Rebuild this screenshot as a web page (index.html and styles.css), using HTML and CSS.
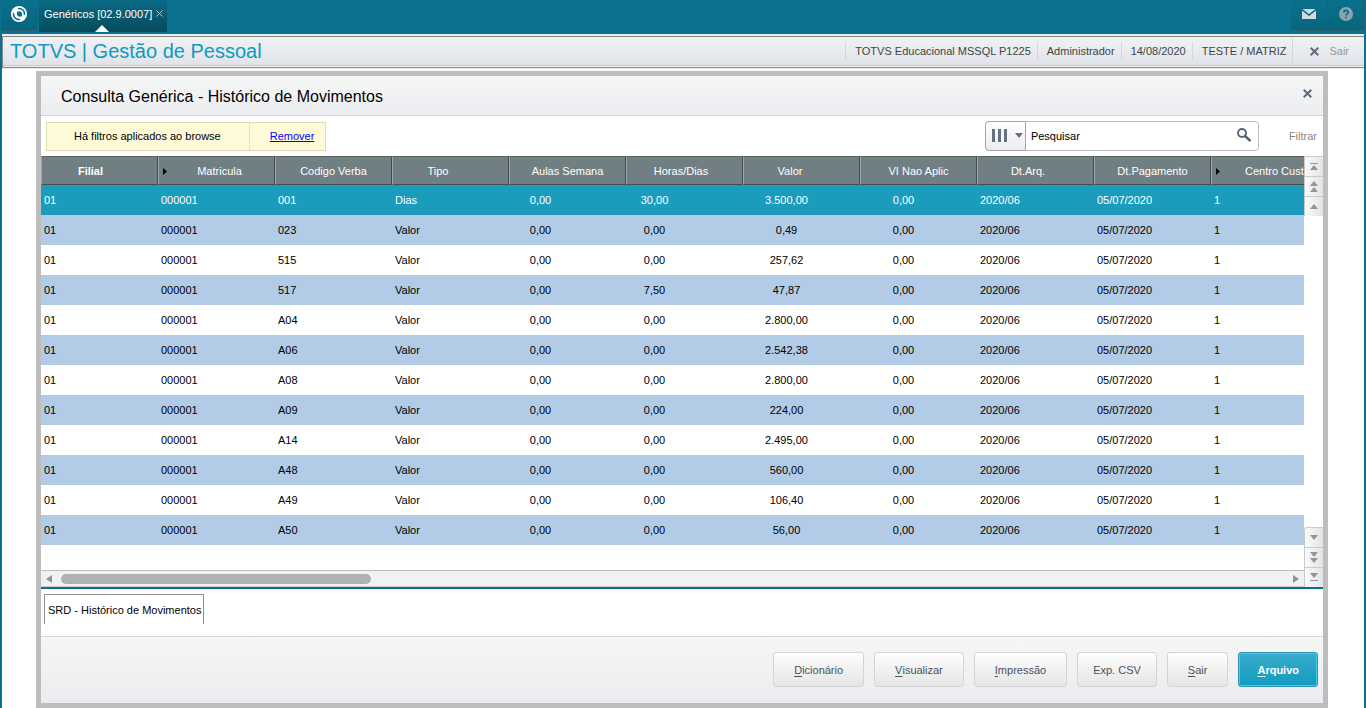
FILE: index.html
```html
<!DOCTYPE html>
<html lang="pt-BR">
<head>
<meta charset="utf-8">
<title>TOTVS | Gestão de Pessoal</title>
<link rel="stylesheet" href="styles.css">
</head>
<body>
<nav class="topbar">
  <button class="top-cell home" aria-label="Início">
    <svg width="18" height="18" viewBox="0 0 18 18"><circle cx="9" cy="9" r="8" fill="#fff"/><path d="M7 6.500h3.500L12 8v3.500H8.500L7 10z" fill="#0a6f8b"/><path d="M8 3.500C12 3 15 6 14.500 10" fill="none" stroke="#0a6f8b" stroke-width="1.500"/><path d="M3.500 8C3 12 6 15 10 14.500" fill="none" stroke="#0a6f8b" stroke-width="1.500"/></svg>
  </button>
  <div class="tab">
    <span>Genéricos [02.9.0007]</span>
    <button class="tab-close" aria-label="Fechar aba"><svg width="7" height="7" viewBox="0 0 7 7" stroke="#a9c6cf"><path d="M.5.500l6 6M6.500.500l-6 6"/></svg></button>
    <svg class="tab-mark" width="14" height="7" viewBox="0 0 14 7" fill="#fff"><path d="M0 7 7 0l7 7z"/></svg>
  </div>
  <div class="top-actions">
    <button class="top-cell" aria-label="Mensagens"><svg width="14" height="10" viewBox="0 0 14 10"><rect width="14" height="10" fill="#cfdbe3"/><path d="M0 .5 7 6l7-5.500" fill="none" stroke="#0a6680" stroke-width="1.500"/></svg></button>
    <button class="top-cell" aria-label="Ajuda"><svg width="14" height="14" viewBox="0 0 14 14"><circle cx="7" cy="7" r="7" fill="#8ba3af"/><path d="M4.800 5.500C4.800 2.600 9.200 2.700 9.200 5.300 9.200 6.900 7 6.800 7 8.600M7 9.700v1.600" fill="none" stroke="#0a6680" stroke-width="1.700"/></svg></button>
  </div>
</nav>
<div class="shell">
  <header class="appbar">
    <h1>TOTVS | Gestão de Pessoal</h1>
    <div class="info">
      <span>TOTVS Educacional MSSQL P1225</span>
      <span>Administrador</span>
      <span>14/08/2020</span>
      <span>TESTE / MATRIZ</span>
    </div>
    <button class="logout"><svg width="9" height="9" viewBox="0 0 9 9" stroke="#636b7b" stroke-width="2"><path d="M.7.700l7.600 7.600M8.300.700.700 8.300"/></svg>Sair</button>
  </header>
  <main class="window">
    <div class="window-head">
      <h2>Consulta Genérica - Histórico de Movimentos</h2>
      <button class="close" aria-label="Fechar"><svg width="9" height="9" viewBox="0 0 9 9" stroke="#636b7b" stroke-width="2"><path d="M.7.700l7.600 7.600M8.300.700.700 8.300"/></svg></button>
    </div>
    <div class="toolbar">
      <div class="notice"><span>Há filtros aplicados ao browse</span><a href="#">Remover</a></div>
      <div class="search">
        <button class="columns" aria-label="Colunas"><svg width="32" height="14" viewBox="0 0 32 14" fill="#677080"><path d="M0 0h3v13H0zM6 0h3v13H6zM12 0h3v13h-3zM23 4h8l-4 5z"/></svg></button>
        <input type="text" value="Pesquisar" aria-label="Pesquisar">
        <button class="find" aria-label="Buscar"><svg width="14" height="14" viewBox="0 0 14 14" fill="none" stroke="#56617a"><circle cx="5" cy="5" r="4" stroke-width="1.900"/><path d="M8 8l5.500 5" stroke-width="2.400"/></svg></button>
      </div>
      <button class="filter">Filtrar</button>
    </div>
    <div class="browse">
      <div class="grid">
        <div class="grid-view">
          <table>
            <thead><tr>
              <th class="c-filial">Filial</th><th class="sorted">Matricula</th><th>Codigo Verba</th><th class="c-tipo">Tipo</th><th>Aulas Semana</th><th class="c-horas">Horas/Dias</th><th class="c-valor">Valor</th><th>VI Nao Aplic</th><th class="c-arq">Dt.Arq.</th><th>Dt.Pagamento</th><th class="sorted c-centro">Centro Cust</th>
            </tr></thead>
            <tbody id="rows"></tbody>
          </table>
        </div>
        <div class="hscroll">
          <button aria-label="Rolar à esquerda"><svg width="6" height="8" viewBox="0 0 6 8" fill="#949494"><path d="M6 0v8L0 4z"/></svg></button>
          <div class="track"><div class="thumb"></div></div>
          <button aria-label="Rolar à direita"><svg width="6" height="8" viewBox="0 0 6 8" fill="#949494"><path d="M0 0v8l6-4z"/></svg></button>
        </div>
      </div>
      <div class="pager">
        <button aria-label="Primeiro"><svg width="8" height="9" viewBox="0 0 8 9" fill="#949494"><path d="M0 1h8v1H0zM0 8l4-5 4 5z"/></svg></button>
        <button aria-label="Página anterior"><svg width="8" height="12" viewBox="0 0 8 12" fill="#949494"><path d="M0 5l4-5 4 5zM0 11l4-5 4 5z"/></svg></button>
        <button aria-label="Linha anterior"><svg width="8" height="5" viewBox="0 0 8 5" fill="#949494"><path d="M0 5l4-5 4 5z"/></svg></button>
        <button class="down" aria-label="Próxima linha"><svg width="8" height="5" viewBox="0 0 8 5" fill="#949494"><path d="M0 0l4 5 4-5z"/></svg></button>
        <button aria-label="Próxima página"><svg width="8" height="12" viewBox="0 0 8 12" fill="#949494"><path d="M0 0l4 5 4-5zM0 6l4 5 4-5z"/></svg></button>
        <button aria-label="Último"><svg width="8" height="9" viewBox="0 0 8 9" fill="#949494"><path d="M0 0l4 5 4-5zM0 7h8v1H0z"/></svg></button>
      </div>
    </div>
    <div class="sheets"><button>SRD - Histórico de Movimentos</button></div>
    <footer class="actions">
      <button><u>D</u>icionário</button>
      <button><u>V</u>isualizar</button>
      <button><u>I</u>mpressão</button>
      <button class="tight">Exp. CSV</button>
      <button><u>S</u>air</button>
      <button class="primary"><u>A</u>rquivo</button>
    </footer>
  </main>
</div>
<script src="rows.js"></script>
</body>
</html>
```
FILE: styles.css
```css
* { box-sizing: border-box; }
body {
  margin: 0;
  height: 100vh;
  display: flex;
  flex-direction: column;
  background: #0a728f;
  font: 11px "Liberation Sans", Arial, sans-serif;
  color: #000;
}
button {
  display: flex;
  align-items: center;
  justify-content: center;
  margin: 0;
  padding: 0;
  border: 0;
  background: none;
  font: inherit;
  color: inherit;
}
h1, h2 { margin: 0; font-weight: normal; }

.topbar { display: flex; height: 34px; flex: none; padding: 0 1px 2px; }
.top-cell {
  width: 37px;
  height: 31px;
  padding-bottom: 3px;
  background: linear-gradient(#0a718d, #07657e);
  border-right: 1px solid #23616f;
  border-bottom: 1px solid #23616f;
}
.tab {
  position: relative;
  display: flex;
  align-items: center;
  gap: 4px;
  margin-left: 1px;
  padding: 0 4px 4px 5px;
  color: #fff;
  background: linear-gradient(#0a6a84, #064b5b);
}
.tab-close { padding-bottom: 2px; }
.tab-mark { position: absolute; left: 50%; bottom: 0; margin-left: -8px; }
.top-actions { display: flex; margin-left: auto; }

.shell {
  flex: 1;
  display: flex;
  flex-direction: column;
  min-height: 0;
  margin: 0 2px;
  background: #fff;
}
.appbar {
  display: flex;
  flex: none;
  height: 32px;
  margin-top: 2px;
  background: linear-gradient(#f0f1f3, #dfe3e8);
  border: 1px solid #858789;
  border-right: 0;
  box-shadow: 0 -2px #eceded, inset 0 -1px #f2f2f2, inset 0 -2px #c5c8cb, 0 1px #ededee;
}
.appbar h1 { padding-left: 7px; font-size: 20px; line-height: 28px; color: #0e9bbf; }
.info { display: flex; align-items: center; margin-left: auto; padding-bottom: 2px; color: #444; }
.info span { padding: 0 6px 0 9px; line-height: 18px; border-left: 1px solid #d3d7da; }
.logout { gap: 10px; margin-bottom: 2px; padding: 0 15px 0 17px; border-left: 1px solid #d3d7da; color: #96969c; }

.window {
  flex: 1;
  display: flex;
  flex-direction: column;
  min-height: 0;
  margin: 3px 36px 0 34px;
  border: 5px solid #bdbdbd;
}
.window-head {
  display: flex;
  justify-content: space-between;
  flex: none;
  height: 40px;
  padding: 0 11px 0 20px;
  background: linear-gradient(#f5f7f6, #ecedf0);
  border-bottom: 1px solid #d5d5d5;
}
.window-head h2 { font-size: 16px; line-height: 41px; }
.close { padding-bottom: 4px; }

.toolbar { display: flex; align-items: center; flex: none; height: 40px; padding: 0 6px 0 5px; }
.notice { display: flex; width: 280px; line-height: 27px; background: #fffbd9; border: 1px solid #dedcb0; }
.notice span { padding: 0 28px 0 27px; border-right: 1px dotted #c9c9b4; }
.notice a { padding-left: 20px; color: #00f; }
.search {
  display: flex;
  width: 274px;
  height: 30px;
  margin-left: auto;
  border: 1px solid #c0c0c0;
  border-radius: 4px;
  background: #fff;
}
.columns {
  width: 41px;
  margin: -1px 0 -1px -1px;
  padding-left: 5px;
  border: 1px solid #a5a5a5;
  border-radius: 4px 0 0 4px;
  background: linear-gradient(#fff, #ebecee);
}
.columns svg, .find svg { flex: none; }
.search input { flex: 1; min-width: 0; padding: 0 5px; border: 0; background: none; font: inherit; color: #000; }
.find { width: 28px; padding-bottom: 2px; }
.filter { margin-left: 30px; color: #85868a; }

.browse { flex: 1; display: flex; min-height: 0; border-bottom: 2px solid #0a6f8b; }
.grid { flex: 1; min-width: 0; display: flex; flex-direction: column; }
.grid-view { flex: 1; min-height: 0; overflow: hidden; }
table { width: 1287px; table-layout: fixed; border-collapse: separate; border-spacing: 0; }
th {
  height: 29px;
  padding: 1px 0 0;
  font-weight: normal;
  color: #fff;
  background: #6f7f82;
  border-top: 1px solid #5c6264;
  border-right: 1px solid #454b4d;
  border-bottom: 1px solid #474b4d;
  border-left: 1px solid #9ba6a8;
}
td { height: 30px; padding: 0 3px; }
tbody tr:nth-child(even) { background: #b2cbe7; }
tbody tr:first-child { background: #1c9cbd; color: #fff; }
.c-filial { padding-right: 18px; font-weight: bold; }
.sorted { background: url("data:image/svg+xml,%3Csvg xmlns='http://www.w3.org/2000/svg' width='4' height='7'%3E%3Cpath d='M0 0v7l4-3.500z'/%3E%3C/svg%3E") no-repeat 4px 11px #6f7f82; padding-left: 6px; }
.c-tipo { padding-right: 25px; }
.c-horas { padding-right: 7px; }
.c-valor { padding-right: 23px; }
.c-arq { padding-right: 15px; }
.c-centro { padding-left: 33px; text-align: left; }
td:nth-child(n+5):nth-child(-n+8) { text-align: center; }
td:nth-child(5) { padding-right: 57px; }
td:nth-child(6) { padding-right: 63px; }
td:nth-child(7), td:nth-child(8) { padding-right: 33px; }

.hscroll { display: flex; flex: none; height: 17px; border-top: 1px solid #bfbfbf; border-bottom: 1px solid #d0d0d0; background: #f1f1f1; }
.hscroll button { width: 16px; }
.track { flex: 1; padding: 3px 4px; }
.thumb { width: 310px; height: 10px; border-radius: 5px; background: #b1b1b1; }
.pager { display: flex; flex-direction: column; width: 19px; flex: none; }
.pager button {
  height: 20px;
  background: linear-gradient(90deg, #fafafb, #e3e4e7);
  border: 1px solid #c9cacc;
  border-width: 1px 0 0 1px;
}
.pager .down { margin-top: auto; border-top-left-radius: 3px; }

.sheets { flex: none; padding: 5px 3px 12px; }
.sheets button { height: 30px; padding: 0 2px 0 3px; border: 1px solid #8f8f8f; border-bottom: 0; background: #fff; }

.actions {
  display: flex;
  justify-content: flex-end;
  gap: 10px;
  flex: none;
  padding: 15px 5px 16px;
  border-top: 1px solid #d7d9d9;
  background: linear-gradient(#f5f7f6, #ebecef);
}
.actions button {
  height: 35px;
  padding: 1px 20px 0;
  white-space: pre;
  color: #4d505c;
  background: linear-gradient(#fefefe, #e5e5e5);
  border: 1px solid #d3d4d5;
  border-radius: 3px;
}
.actions u { text-underline-offset: 2px; }
.actions .tight { padding: 1px 15px 0; }
.actions .primary {
  padding: 1px 18px 0;
  font-weight: bold;
  color: #fff;
  background: linear-gradient(#3aaccb, #119bc0);
  border-color: #2c94ad;
  box-shadow: inset 0 0 0 1px #45cdf0;
}
```
FILE: rows.js
```js
const rows = [
  ["001", "Dias", "30,00", "3.500,00"],
  ["023", "Valor", "0,00", "0,49"],
  ["515", "Valor", "0,00", "257,62"],
  ["517", "Valor", "7,50", "47,87"],
  ["A04", "Valor", "0,00", "2.800,00"],
  ["A06", "Valor", "0,00", "2.542,38"],
  ["A08", "Valor", "0,00", "2.800,00"],
  ["A09", "Valor", "0,00", "224,00"],
  ["A14", "Valor", "0,00", "2.495,00"],
  ["A48", "Valor", "0,00", "560,00"],
  ["A49", "Valor", "0,00", "106,40"],
  ["A50", "Valor", "0,00", "56,00"]
];
const body = document.getElementById("rows");
for (const [verba, tipo, horas, valor] of rows) {
  const tr = body.insertRow();
  for (const text of ["01", "000001", verba, tipo, "0,00", horas, valor, "0,00", "2020/06", "05/07/2020", "1"]) {
    tr.insertCell().textContent = text;
  }
}
```
